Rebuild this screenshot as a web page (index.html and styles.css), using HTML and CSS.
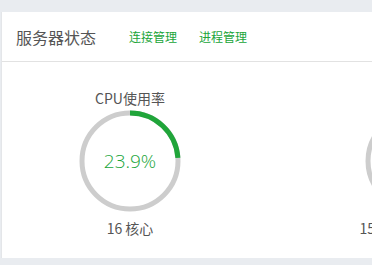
FILE: index.html
```html
<!DOCTYPE html>
<html lang="zh-CN">
<head>
<meta charset="utf-8">
<title>服务器状态</title>
<link rel="stylesheet" href="styles.css">
</head>
<body>
<div class="card">
  <div class="card-head">
    <span class="card-title">服务器状态</span>
    <a class="head-link" href="#">连接管理</a>
    <a class="head-link" href="#">进程管理</a>
  </div>
  <div class="card-body">
    <div class="gauge">
      <div class="gauge-title">CPU使用率</div>
      <div class="gauge-ring">
        <svg class="ring-svg" width="102" height="102" viewBox="0 0 102 102">
          <circle class="ring-track" cx="51" cy="51" r="48"/>
          <circle class="ring-fill" cx="51" cy="51" r="48" stroke-dasharray="72.08 301.59" transform="rotate(-90 51 51)"/>
        </svg>
        <div class="ring-value">23.9%</div>
      </div>
      <div class="gauge-foot">16 核心</div>
    </div>
    <div class="gauge">
      <div class="gauge-title">内存使用率</div>
      <div class="gauge-ring">
        <svg class="ring-svg" width="102" height="102" viewBox="0 0 102 102">
          <circle class="ring-track" cx="51" cy="51" r="48"/>
          <circle class="ring-fill" cx="51" cy="51" r="48" stroke-dasharray="30.16 301.59" transform="rotate(-90 51 51)"/>
        </svg>
        <div class="ring-value">10%</div>
      </div>
      <div class="gauge-foot">15520/31952(MB)</div>
    </div>
  </div>
</div>
</body>
</html>
```
FILE: styles.css
```css
html, body {
  margin: 0;
  padding: 0;
}
body {
  background: #e9ecf0;
  overflow: hidden;
  width: 372px;
  height: 265px;
  font-family: "Noto Sans CJK SC", "Open Sans", sans-serif;
}
.card {
  margin: 12px 0 0 1px;
  width: 700px;
  height: 246px;
  background: #fff;
  border-left: 1px solid #e4e6e9;
  box-sizing: border-box;
}
.card-head {
  height: 50px;
  box-sizing: border-box;
  border-bottom: 1px solid #e2e2e2;
  display: flex;
  align-items: center;
  padding-left: 14px;
}
.card-title {
  font-size: 16px;
  color: #555;
  margin-right: 17px;
}
.head-link {
  font-size: 12px;
  color: #20a53a;
  text-decoration: none;
  margin-left: 16px;
  margin-right: 6px;
}
.card-body {
  display: flex;
  gap: 126px;
  padding: 26px 0 0 48px;
}
.gauge {
  width: 160px;
  display: flex;
  flex-direction: column;
  align-items: center;
}
.gauge-title {
  font-size: 14px;
  line-height: 20px;
  color: #555;
}
.gauge-ring {
  display: grid;
  margin-top: 2px;
  place-items: center;
}
.ring-svg, .ring-value {
  grid-area: 1 / 1;
}
.ring-svg {
  display: block;
}
.ring-track {
  fill: none;
  stroke: #cdcdcd;
  stroke-width: 5;
}
.ring-fill {
  fill: none;
  stroke: #20a53a;
  stroke-width: 5;
}
.ring-value {
  font-size: 19px;
  font-weight: 300;
  color: #20a53a;
  font-family: "Open Sans", "Noto Sans CJK SC", sans-serif;
}
.gauge-foot {
  font-size: 14px;
  line-height: 20px;
  margin-top: 6px;
  color: #555;
}
```
